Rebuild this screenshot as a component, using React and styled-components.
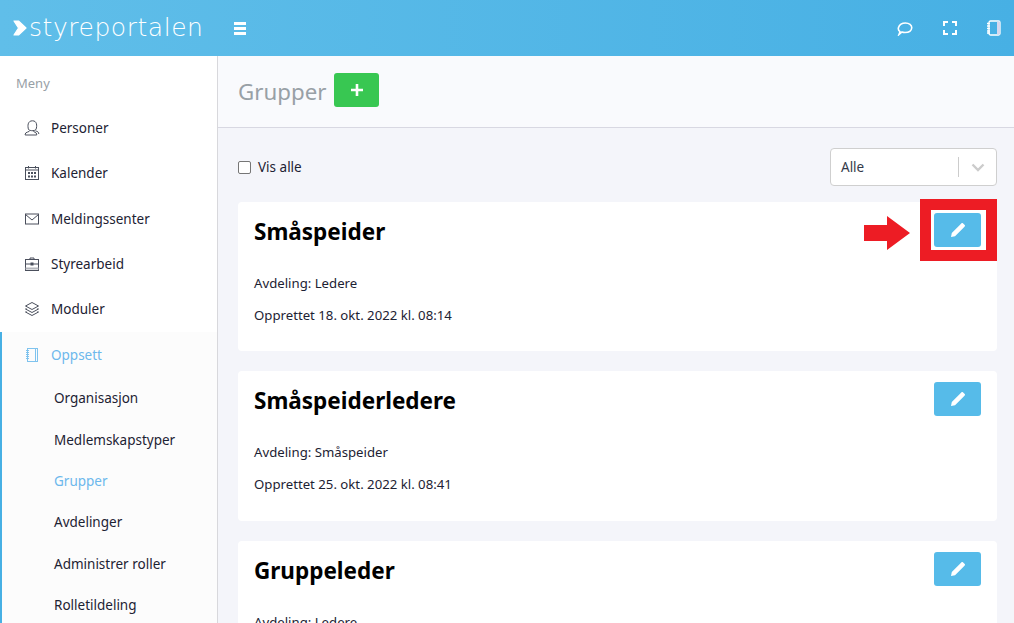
import React from 'react';
import styled, { createGlobalStyle } from 'styled-components';

const GlobalStyle = createGlobalStyle`
  html, body {
    margin: 0;
    height: 100%;
    overflow: hidden;
    background: #f4f5fa;
    font-family: "Noto Sans", "Open Sans", "Liberation Sans", sans-serif;
  }
  * { box-sizing: border-box; }
`;

const Page = styled.div`
  width: 1014px;
  height: 623px;
  display: flex;
  flex-direction: column;
  overflow: hidden;
`;

const Header = styled.header`
  height: 56px;
  flex: none;
  display: flex;
  align-items: center;
  background: linear-gradient(90deg, #60bee9, #47b0e4);
  color: #fff;
`;

const Logo = styled.div`
  width: 217px;
  padding-left: 13px;
  display: flex;
  align-items: center;
  gap: 2px;
`;

const LogoText = styled.span`
  font-family: "DejaVu Sans", sans-serif;
  font-size: 25px;
  font-weight: 200;
  line-height: 1;
  letter-spacing: 0.54px;
  margin-top: -2px;
`;

const Burger = styled.div`
  margin-left: 17px;
  width: 12px;
  display: flex;
  flex-direction: column;
  gap: 2px;
  span {
    height: 3px;
    background: #fff;
  }
`;

const HeaderIcons = styled.div`
  margin-left: auto;
  padding-right: 13px;
  display: flex;
  align-items: center;
  gap: 30px;
  svg { display: block; }
`;

const Body = styled.div`
  flex: 1;
  display: flex;
  min-height: 0;
`;

const Sidebar = styled.aside`
  width: 218px;
  flex: none;
  background: #fff;
  border-right: 1px solid #d8d8dc;
  padding-top: 18px;
`;

const MenuTitle = styled.div`
  font-size: 13px;
  line-height: 18px;
  color: #98a0a6;
  padding-left: 16px;
  margin-bottom: 13.5px;
`;

const MenuItem = styled.div`
  height: 45.33px;
  padding-left: 24px;
  display: flex;
  align-items: center;
  gap: 11px;
  font-size: 13.5px;
  color: ${p => (p.$active ? '#6cb8ec' : '#1d2233')};
  svg { flex: none; display: block; }
`;

const Section = styled.div`
  background: #fcfcfc;
  border-left: 2px solid #47b0e4;
  ${MenuItem} { padding-left: 22px; }
`;

const SubItem = styled.div`
  height: 41.4px;
  padding-left: 52px;
  display: flex;
  align-items: center;
  font-size: 13.5px;
  color: ${p => (p.$active ? '#6cb8ec' : '#1d2233')};
`;

const Main = styled.main`
  flex: 1;
  min-width: 0;
  background: #f4f5fa;
`;

const PageHead = styled.div`
  height: 72px;
  padding: 0 20px;
  background: #f9fafd;
  border-bottom: 1px solid #d8d8e2;
  display: flex;
  align-items: center;
  gap: 8px;
`;

const PageTitle = styled.h1`
  margin: 0;
  font-size: 22.3px;
  font-weight: 400;
  color: #98a0a6;
`;

const AddButton = styled.div`
  width: 45px;
  height: 34px;
  margin-top: -4px;
  border-radius: 3px;
  background: #38c752;
  display: flex;
  align-items: center;
  justify-content: center;
`;

const Content = styled.div`
  padding: 20px 17px 0 20px;
`;

const FilterRow = styled.div`
  height: 38px;
  display: flex;
  align-items: center;
  justify-content: space-between;
  margin-bottom: 16px;
`;

const ShowAll = styled.label`
  display: flex;
  align-items: center;
  gap: 7px;
  font-size: 13.5px;
  color: #1d2233;
`;

const CheckBox = styled.span`
  width: 13px;
  height: 13px;
  border: 1px solid #767676;
  border-radius: 2px;
  background: #fff;
`;

const Select = styled.div`
  width: 167px;
  height: 38px;
  border: 1px solid #cfcfcf;
  border-radius: 4px;
  background: #fff;
  display: flex;
  align-items: center;
  padding-left: 10px;
  font-size: 13.5px;
  color: #333a4a;
`;

const SelectValue = styled.span`
  flex: 1;
`;

const SelectDivider = styled.span`
  width: 1px;
  height: 20px;
  background: #cccccc;
`;

const SelectArrow = styled.span`
  width: 37px;
  display: flex;
  justify-content: center;
`;

const CardList = styled.div`
  display: flex;
  flex-direction: column;
  gap: 20px;
`;

const Card = styled.section`
  position: relative;
  height: 149.4px;
  flex: none;
  padding: 11px 16px;
  background: #fff;
  border-radius: 4px;
`;

const CardTop = styled.div`
  display: flex;
  justify-content: space-between;
  align-items: flex-start;
  height: 34px;
  margin-bottom: 27px;
`;

const CardTitle = styled.h2`
  margin: 0;
  font-size: 22.5px;
  line-height: 38px;
  font-weight: 700;
  color: #000;
`;

const EditButton = styled.div`
  width: 47px;
  height: 34px;
  border-radius: 3px;
  background: #56bbe9;
  display: flex;
  align-items: center;
  justify-content: center;
`;

const CardLine = styled.p`
  margin: 0 0 13px;
  font-size: 13.2px;
  line-height: 19px;
  color: #1d2233;
`;

const Highlight = styled.div`
  position: absolute;
  top: -3px;
  right: 0;
  width: 77px;
  height: 62px;
  border: 11px solid #ed1c24;
`;

const Arrow = styled.svg`
  position: absolute;
  top: 14px;
  right: 87px;
`;

const Stroke = ({ size = 16, children, color = '#4a4f5c' }) => (
  <svg width={size} height={size} viewBox="0 0 16 16" fill="none" stroke={color} strokeWidth="1">
    {children}
  </svg>
);

const PersonIcon = () => (
  <Stroke>
    <path d="M4.500 9.500C3.500 6 3.500.800 8.500.800c4.500 0 4.800 5 3.500 8.700-.7.800-2 1.200-3.500 1.200s-3.200-.4-4-1.200z" />
    <path d="M6 10.500c-.2 1.500-4.800 1.500-4.800 3.500v1h11.500v-1c0-1.500-3-1.800-4-3.500" />
    <path d="M11.500 11c2 .3 3.300 1 3.300 3" />
  </Stroke>
);

const CalendarIcon = () => (
  <Stroke>
    <rect x="1.500" y="2.500" width="13" height="12" />
    <path d="M1.500 5h13M4.500 1v2.500M11.500 1v2.500" />
    <path d="M4 7h2v2H4zM7 7h2v2H7zM10 7h2v2h-2zM4 10.500h2v2H4zM7 10.500h2v2H7zM10 10.500h2v2h-2z" fill="#4a4f5c" stroke="none" />
  </Stroke>
);

const MailIcon = () => (
  <Stroke>
    <rect x="1.500" y="3" width="13" height="10" />
    <path d="M1.500 3.500 8 9l6.500-5.500" />
  </Stroke>
);

const CaseIcon = () => (
  <Stroke>
    <rect x="1.500" y="3.500" width="13" height="11" />
    <path d="M1.500 8h13M6 3.500V2h4v1.500" />
    <rect x="7" y="7" width="2" height="2" fill="#4a4f5c" />
    <path d="M1.500 12.500h13" stroke="#b4b6bc" strokeWidth="2" />
  </Stroke>
);

const LayersIcon = () => (
  <Stroke>
    <path d="M8 1.500 14.500 5 8 8.500 1.500 5z" />
    <path d="M2.500 7.500 1.500 8 8 11.500 14.500 8l-1-.5" />
    <path d="M2.500 10.500 1.500 11 8 14.500 14.500 11l-1-.5" />
  </Stroke>
);

const NotebookIcon = ({ color = '#7fc3ee', size = 16 }) => (
  <Stroke color={color} size={size}>
    <rect x="3.500" y="1.500" width="10" height="13" />
    <path d="M11.500 1.500v13" />
    <path d="M2 3.500h3M2 5.500h3M2 7.500h3M2 9.500h3M2 11.500h3" />
  </Stroke>
);

const PencilIcon = () => (
  <svg width="14" height="14" viewBox="0 0 14 14" fill="#fff">
    <path d="M0 14l.8-4L9.800 1l.7-.7c.4-.4 1-.4 1.400 0l1.800 1.800c.4.400.4 1 0 1.400l-.7.700-9 9z" />
  </svg>
);

const groups = [
  { name: 'Småspeider', unit: 'Ledere', created: '18. okt. 2022 kl. 08:14', marked: true },
  { name: 'Småspeiderledere', unit: 'Småspeider', created: '25. okt. 2022 kl. 08:41' },
  { name: 'Gruppeleder', unit: 'Ledere', created: '25. okt. 2022 kl. 08:44' },
];

const subItems = ['Organisasjon', 'Medlemskapstyper', 'Grupper', 'Avdelinger', 'Administrer roller', 'Rolletildeling'];

export default function App() {
  return (
    <Page>
      <GlobalStyle />
      <Header>
        <Logo>
          <svg width="14" height="16" viewBox="0 0 14 16" fill="#fff" stroke="#fff" strokeWidth="1.200" strokeLinejoin="round">
            <path d="M1 1h4.500L13 8l-7.500 7H1l4.500-7z" />
          </svg>
          <LogoText>styreportalen</LogoText>
        </Logo>
        <Burger><span /><span /><span /></Burger>
        <HeaderIcons>
          <svg width="16" height="15" viewBox="0 0 16 15" fill="none" stroke="#fff" strokeWidth="1.600">
            <path d="M2 13.500l1-2.800C1.500 9.500 1 8 1.500 6.500 2.500 3.500 5.500 2 8.500 2 12 2 15 4 14.700 7c-.3 3-3.500 4.500-6.700 4.500-1.300 0-2.300-.2-3-.5z" />
          </svg>
          <svg width="14" height="14" viewBox="0 0 14 14" fill="none" stroke="#fff" strokeWidth="2">
            <path d="M1 5V1h4M9 1h4v4M13 9v4H9M5 13H1V9" />
          </svg>
          <svg width="14" height="16" viewBox="0 0 14 16" fill="none" stroke="#fff" strokeWidth="1.300">
            <rect x="2" y="1" width="11" height="14" rx="1.500" />
            <rect x="10" y="1.500" width="3" height="13" fill="#d8d8ee" stroke="none" />
            <path d="M0 3.500h3M0 6h3M0 8.500h3M0 11h3M0 13h3" />
          </svg>
        </HeaderIcons>
      </Header>
      <Body>
        <Sidebar>
          <MenuTitle>Meny</MenuTitle>
          <MenuItem><PersonIcon />Personer</MenuItem>
          <MenuItem><CalendarIcon />Kalender</MenuItem>
          <MenuItem><MailIcon />Meldingssenter</MenuItem>
          <MenuItem><CaseIcon />Styrearbeid</MenuItem>
          <MenuItem><LayersIcon />Moduler</MenuItem>
          <Section>
            <MenuItem $active><NotebookIcon />Oppsett</MenuItem>
            {subItems.map(item => (
              <SubItem key={item} $active={item === 'Grupper'}>{item}</SubItem>
            ))}
          </Section>
        </Sidebar>
        <Main>
          <PageHead>
            <PageTitle>Grupper</PageTitle>
            <AddButton>
              <svg width="12" height="12" viewBox="0 0 12 12" fill="#fff">
                <path d="M4.700 0h2.600v4.700H12v2.600H7.300V12H4.700V7.300H0V4.700h4.700z" />
              </svg>
            </AddButton>
          </PageHead>
          <Content>
            <FilterRow>
              <ShowAll><CheckBox />Vis alle</ShowAll>
              <Select>
                <SelectValue>Alle</SelectValue>
                <SelectDivider />
                <SelectArrow>
                  <svg width="14" height="9" viewBox="0 0 14 9" fill="none" stroke="#cccccc" strokeWidth="2.400">
                    <path d="M1.500 1.500 7 7l5.500-5.500" />
                  </svg>
                </SelectArrow>
              </Select>
            </FilterRow>
            <CardList>
              {groups.map(group => (
                <Card key={group.name}>
                  <CardTop>
                    <CardTitle>{group.name}</CardTitle>
                    <EditButton><PencilIcon /></EditButton>
                  </CardTop>
                  <CardLine>Avdeling: {group.unit}</CardLine>
                  <CardLine>Opprettet {group.created}</CardLine>
                  {group.marked && (
                    <>
                      <Highlight />
                      <Arrow width="46" height="34" viewBox="0 0 46 34" fill="#ed1c24">
                        <path d="M0 9h23V0l23 17-23 17v-9H0z" />
                      </Arrow>
                    </>
                  )}
                </Card>
              ))}
            </CardList>
          </Content>
        </Main>
      </Body>
    </Page>
  );
}
